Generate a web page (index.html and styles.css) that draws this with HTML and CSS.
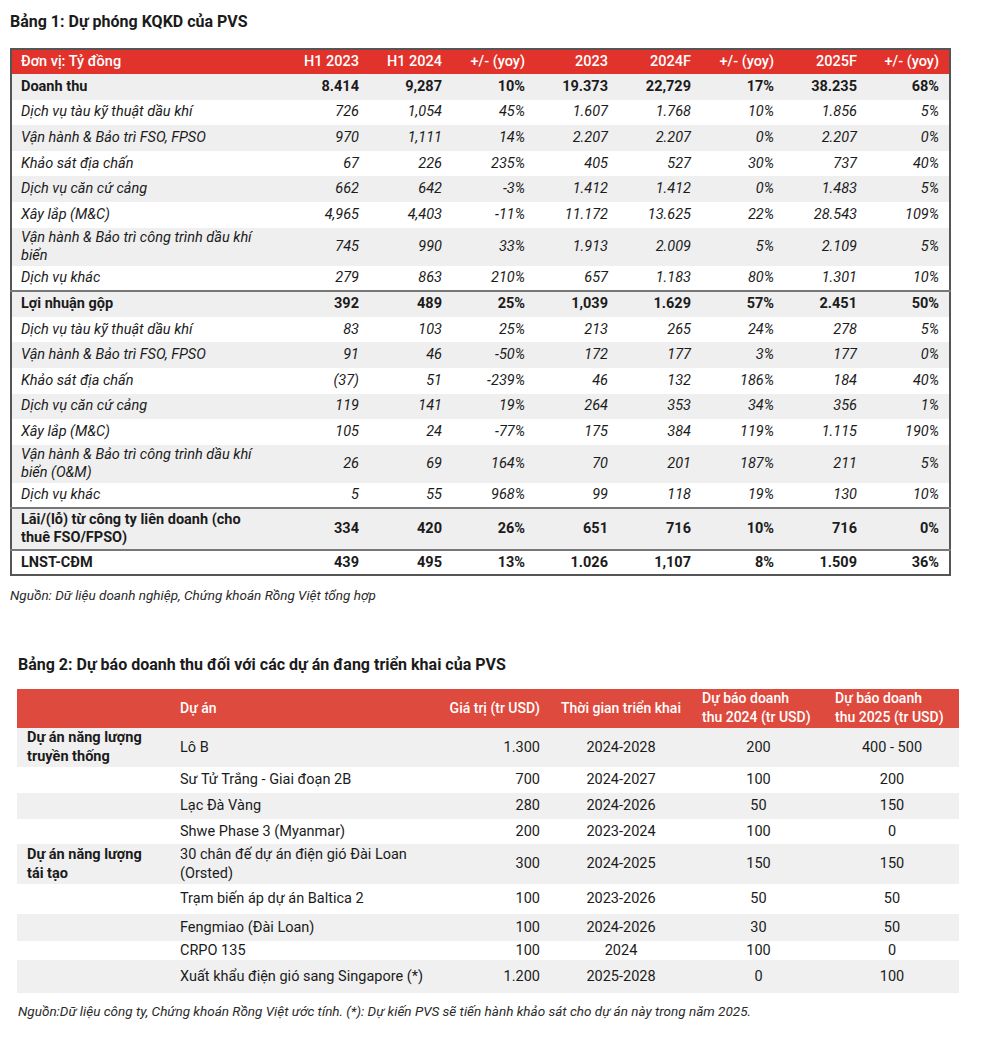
FILE: index.html
```html
<!DOCTYPE html>
<html lang="vi">
<head>
<meta charset="utf-8">
<title>PVS</title>
<link rel="stylesheet" href="styles.css">
</head>
<body>
<section class="block1">
  <h2 class="title t-title1">Bảng 1: Dự phóng KQKD của PVS</h2>
  <table class="t1">
    <colgroup>
      <col class="c-label"><col class="c-num"><col class="c-num"><col class="c-num"><col class="c-num"><col class="c-num"><col class="c-num"><col class="c-num"><col class="c-num">
    </colgroup>
    <thead>
      <tr class="head"><th class="lab">Đơn vị: Tỷ đồng</th><th>H1 2023</th><th>H1 2024</th><th class="yoy">+/- (yoy)</th><th>2023</th><th>2024F</th><th class="yoy">+/- (yoy)</th><th>2025F</th><th class="yoy">+/- (yoy)</th></tr>
    </thead>
    <tbody>
      <tr class="bold g"><td class="lab">Doanh thu</td><td>8.414</td><td>9,287</td><td>10%</td><td>19.373</td><td>22,729</td><td>17%</td><td>38.235</td><td>68%</td></tr>
      <tr class="it"><td class="lab">Dịch vụ tàu kỹ thuật dầu khí</td><td>726</td><td>1,054</td><td>45%</td><td>1.607</td><td>1.768</td><td>10%</td><td>1.856</td><td>5%</td></tr>
      <tr class="it g"><td class="lab">Vận hành &amp; Bảo trì FSO, FPSO</td><td>970</td><td>1,111</td><td>14%</td><td>2.207</td><td>2.207</td><td>0%</td><td>2.207</td><td>0%</td></tr>
      <tr class="it"><td class="lab">Khảo sát địa chấn</td><td>67</td><td>226</td><td>235%</td><td>405</td><td>527</td><td>30%</td><td>737</td><td>40%</td></tr>
      <tr class="it g"><td class="lab">Dịch vụ căn cứ cảng</td><td>662</td><td>642</td><td>-3%</td><td>1.412</td><td>1.412</td><td>0%</td><td>1.483</td><td>5%</td></tr>
      <tr class="it"><td class="lab">Xây lắp (M&amp;C)</td><td>4,965</td><td>4,403</td><td>-11%</td><td>11.172</td><td>13.625</td><td>22%</td><td>28.543</td><td>109%</td></tr>
      <tr class="it g two"><td class="lab">Vận hành &amp; Bảo trì công trình dầu khí<br>biển</td><td>745</td><td>990</td><td>33%</td><td>1.913</td><td>2.009</td><td>5%</td><td>2.109</td><td>5%</td></tr>
      <tr class="it"><td class="lab">Dịch vụ khác</td><td>279</td><td>863</td><td>210%</td><td>657</td><td>1.183</td><td>80%</td><td>1.301</td><td>10%</td></tr>
      <tr class="bold g sep"><td class="lab">Lợi nhuận gộp</td><td>392</td><td>489</td><td>25%</td><td>1,039</td><td>1.629</td><td>57%</td><td>2.451</td><td>50%</td></tr>
      <tr class="it"><td class="lab">Dịch vụ tàu kỹ thuật dầu khí</td><td>83</td><td>103</td><td>25%</td><td>213</td><td>265</td><td>24%</td><td>278</td><td>5%</td></tr>
      <tr class="it g"><td class="lab">Vận hành &amp; Bảo trì FSO, FPSO</td><td>91</td><td>46</td><td>-50%</td><td>172</td><td>177</td><td>3%</td><td>177</td><td>0%</td></tr>
      <tr class="it"><td class="lab">Khảo sát địa chấn</td><td>(37)</td><td>51</td><td>-239%</td><td>46</td><td>132</td><td>186%</td><td>184</td><td>40%</td></tr>
      <tr class="it g"><td class="lab">Dịch vụ căn cứ cảng</td><td>119</td><td>141</td><td>19%</td><td>264</td><td>353</td><td>34%</td><td>356</td><td>1%</td></tr>
      <tr class="it"><td class="lab">Xây lắp (M&amp;C)</td><td>105</td><td>24</td><td>-77%</td><td>175</td><td>384</td><td>119%</td><td>1.115</td><td>190%</td></tr>
      <tr class="it g two"><td class="lab">Vận hành &amp; Bảo trì công trình dầu khí<br>biển (O&amp;M)</td><td>26</td><td>69</td><td>164%</td><td>70</td><td>201</td><td>187%</td><td>211</td><td>5%</td></tr>
      <tr class="it"><td class="lab">Dịch vụ khác</td><td>5</td><td>55</td><td>968%</td><td>99</td><td>118</td><td>19%</td><td>130</td><td>10%</td></tr>
      <tr class="bold g sep two2"><td class="lab">Lãi/(lỗ) từ công ty liên doanh (cho<br>thuê FSO/FPSO)</td><td>334</td><td>420</td><td>26%</td><td>651</td><td>716</td><td>10%</td><td>716</td><td>0%</td></tr>
      <tr class="bold sep last"><td class="lab">LNST-CĐM</td><td>439</td><td>495</td><td>13%</td><td>1.026</td><td>1,107</td><td>8%</td><td>1.509</td><td>36%</td></tr>
    </tbody>
  </table>
  <p class="note note1">Nguồn: Dữ liệu doanh nghiệp, Chứng khoán Rồng Việt tổng hợp</p>
</section>

<section class="block2">
  <h2 class="title t-title2">Bảng 2: Dự báo doanh thu đối với các dự án đang triển khai của PVS</h2>
  <table class="t2">
    <colgroup>
      <col class="k-cat"><col class="k-proj"><col class="k-val"><col class="k-time"><col class="k-f24"><col class="k-f25">
    </colgroup>
    <thead>
      <tr class="head2"><th></th><th class="left">Dự án</th><th class="right">Giá trị (tr USD)</th><th class="center">Thời gian triển khai</th><th class="left">Dự báo doanh<br>thu 2024 (tr USD)</th><th class="left">Dự báo doanh<br>thu 2025 (tr USD)</th></tr>
    </thead>
    <tbody>
      <tr class="g h39"><td class="cat">Dự án năng lượng<br>truyền thống</td><td>Lô B</td><td class="right">1.300</td><td class="center">2024-2028</td><td class="center">200</td><td class="center">400 - 500</td></tr>
      <tr class="h26"><td class="cat"></td><td>Sư Tử Trắng - Giai đoạn 2B</td><td class="right">700</td><td class="center">2024-2027</td><td class="center">100</td><td class="center">200</td></tr>
      <tr class="g h26"><td class="cat"></td><td>Lạc Đà Vàng</td><td class="right">280</td><td class="center">2024-2026</td><td class="center">50</td><td class="center">150</td></tr>
      <tr class="h25"><td class="cat"></td><td>Shwe Phase 3 (Myanmar)</td><td class="right">200</td><td class="center">2023-2024</td><td class="center">100</td><td class="center">0</td></tr>
      <tr class="g h40"><td class="cat">Dự án năng lượng<br>tái tạo</td><td>30 chân đế dự án điện gió Đài Loan<br>(Orsted)</td><td class="right">300</td><td class="center">2024-2025</td><td class="center">150</td><td class="center">150</td></tr>
      <tr class="h30"><td class="cat"></td><td>Trạm biến áp dự án Baltica 2</td><td class="right">100</td><td class="center">2023-2026</td><td class="center">50</td><td class="center">50</td></tr>
      <tr class="g h27"><td class="cat"></td><td>Fengmiao (Đài Loan)</td><td class="right">100</td><td class="center">2024-2026</td><td class="center">30</td><td class="center">50</td></tr>
      <tr class="h19"><td class="cat"></td><td>CRPO 135</td><td class="right">100</td><td class="center">2024</td><td class="center">100</td><td class="center">0</td></tr>
      <tr class="g h33"><td class="cat"></td><td>Xuất khẩu điện gió sang Singapore (*)</td><td class="right">1.200</td><td class="center">2025-2028</td><td class="center">0</td><td class="center">100</td></tr>
    </tbody>
  </table>
  <p class="note note2">Nguồn:Dữ liệu công ty, Chứng khoán Rồng Việt ước tính. (*): Dự kiến PVS sẽ tiến hành khảo sát cho dự án này trong năm 2025.</p>
</section>
</body>
</html>
```

FILE: styles.css
```css
* { box-sizing: border-box; }

body {
  margin: 0;
  background: #ffffff;
  color: #1b1b1b;
  font-family: Roboto, "Noto Sans", "Liberation Sans", sans-serif;
}

.title {
  margin: 0;
  font-size: 16px;
  line-height: 20px;
  font-weight: 700;
  color: #1b1b1b;
}

/* ---------- Table 1 ---------- */
.block1 {
  padding: 12px 0 0 10px;
}

.t1 {
  margin-top: 16px;
  width: 939px;
  border-collapse: collapse;
  table-layout: fixed;
  border: 2px solid #555555;
  font-size: 14.5px;
}

.c-label { width: 275px; }
.c-num { width: 83px; }

.t1 th,
.t1 td {
  padding: 0 10px 0 0;
  text-align: right;
  white-space: nowrap;
  vertical-align: middle;
  line-height: 18px;
}

.t1 .lab {
  text-align: left;
  padding-left: 9px;
}

.t1 .head {
  height: 25px;
  background: #e1332b;
  color: #ffffff;
}

.t1 .head th {
  font-weight: 500;
  font-size: 14.5px;
}

.t1 tbody tr { height: 25.6px; }
.t1 tbody tr.two { height: 38px; }
.t1 tbody tr.two2 { height: 42px; }
.t1 tbody tr.last { height: 24.5px; }

.t1 tr.g { background: #efefef; }
.t1 tr.it td { font-style: italic; }
.t1 tr.bold td { font-weight: 700; }
.t1 tr.sep td { border-top: 2px solid #777777; }

.note {
  margin: 0;
  font-style: italic;
  font-size: 13.5px;
  line-height: 18px;
  color: #2a2a2a;
}

.note1 {
  margin-top: 10px;
}

/* ---------- Table 2 ---------- */
.block2 {
  padding: 51px 0 0 17px;
}

.t-title2 {
  padding-left: 1px;
}

.t2 {
  margin-top: 14px;
  width: 942px;
  border-collapse: collapse;
  table-layout: fixed;
  font-size: 14.5px;
}

.k-cat { width: 153px; }
.k-proj { width: 275px; }
.k-val { width: 105px; }
.k-time { width: 142px; }
.k-f24 { width: 133px; }
.k-f25 { width: 134px; }

.t2 th,
.t2 td {
  padding: 0 0 0 10px;
  text-align: left;
  vertical-align: middle;
  line-height: 19px;
  white-space: nowrap;
}

.t2 .head2 {
  height: 39px;
  background: #df4a3e;
  color: #ffffff;
}

.t2 .head2 th {
  font-weight: 500;
  font-size: 14px;
  line-height: 19px;
}

.t2 .right { text-align: right; padding: 0 10px 0 0; }
.t2 .center { text-align: center; padding: 0; }
.t2 .head2 th.left { padding-left: 10px; }

.t2 td.cat {
  font-weight: 700;
}

.t2 tr.g { background: #f0f0f0; }

.t2 tr.h39 { height: 39px; }
.t2 tr.h40 { height: 40px; }
.t2 tr.h33 { height: 33px; }
.t2 tr.h30 { height: 30px; }
.t2 tr.h27 { height: 27px; }
.t2 tr.h26 { height: 26px; }
.t2 tr.h25 { height: 25px; }
.t2 tr.h19 { height: 19px; }

.note2 {
  margin-top: 9px;
  padding-left: 1px;
}
```
